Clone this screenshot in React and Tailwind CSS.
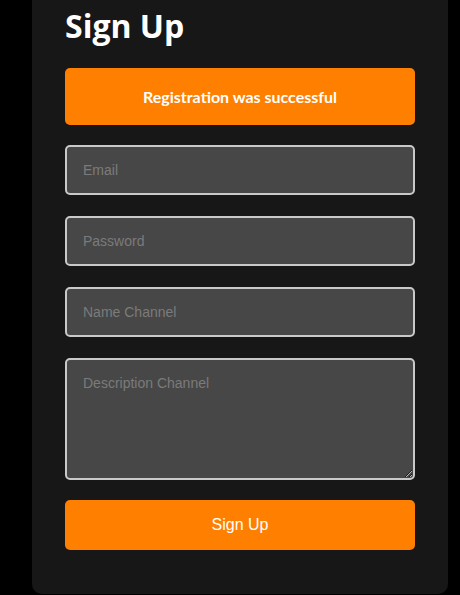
import React from 'react';

const inputCls =
  "w-full h-[50px] rounded-[5px] border-2 border-[#c9c9c9] bg-[#474747] px-4 text-sm text-white outline-none placeholder:text-[#7b7b7b] font-['Liberation_Sans',Arial,sans-serif]";

export default function App() {
  return (
    <div className="min-h-[595px] h-[595px] bg-black overflow-hidden">
      <div className="mx-[32px] w-[416px] rounded-b-[10px] bg-[#171717] px-[33px] pt-[7px] pb-[44px]">
        <h1 className="text-[32px] leading-[38px] font-bold text-white font-['Open_Sans',sans-serif]">
          Sign Up
        </h1>
        <div className="mt-[23px] flex h-[57px] items-center justify-center rounded-[5px] bg-[#ff7f00] pt-px text-base font-bold text-white font-['Lato',sans-serif]">
          Registration was successful
        </div>
        <form className="mt-[20px] flex flex-col gap-[21px]" onSubmit={(e) => e.preventDefault()}>
          <input type="email" placeholder="Email" className={inputCls} />
          <input type="password" placeholder="Password" className={inputCls} />
          <input type="text" placeholder="Name Channel" className={inputCls} />
          <textarea
            placeholder="Description Channel"
            className="block w-full h-[122px] rounded-[5px] border-2 border-[#c9c9c9] bg-[#474747] px-4 py-[13px] text-sm text-white outline-none placeholder:text-[#7b7b7b] font-['Liberation_Sans',Arial,sans-serif]"
          />
          <button
            type="submit"
            className="-mt-px h-[50px] w-full rounded-[5px] bg-[#ff7f00] text-base text-white font-['Liberation_Sans',Arial,sans-serif]"
          >
            Sign Up
          </button>
        </form>
      </div>
    </div>
  );
}
